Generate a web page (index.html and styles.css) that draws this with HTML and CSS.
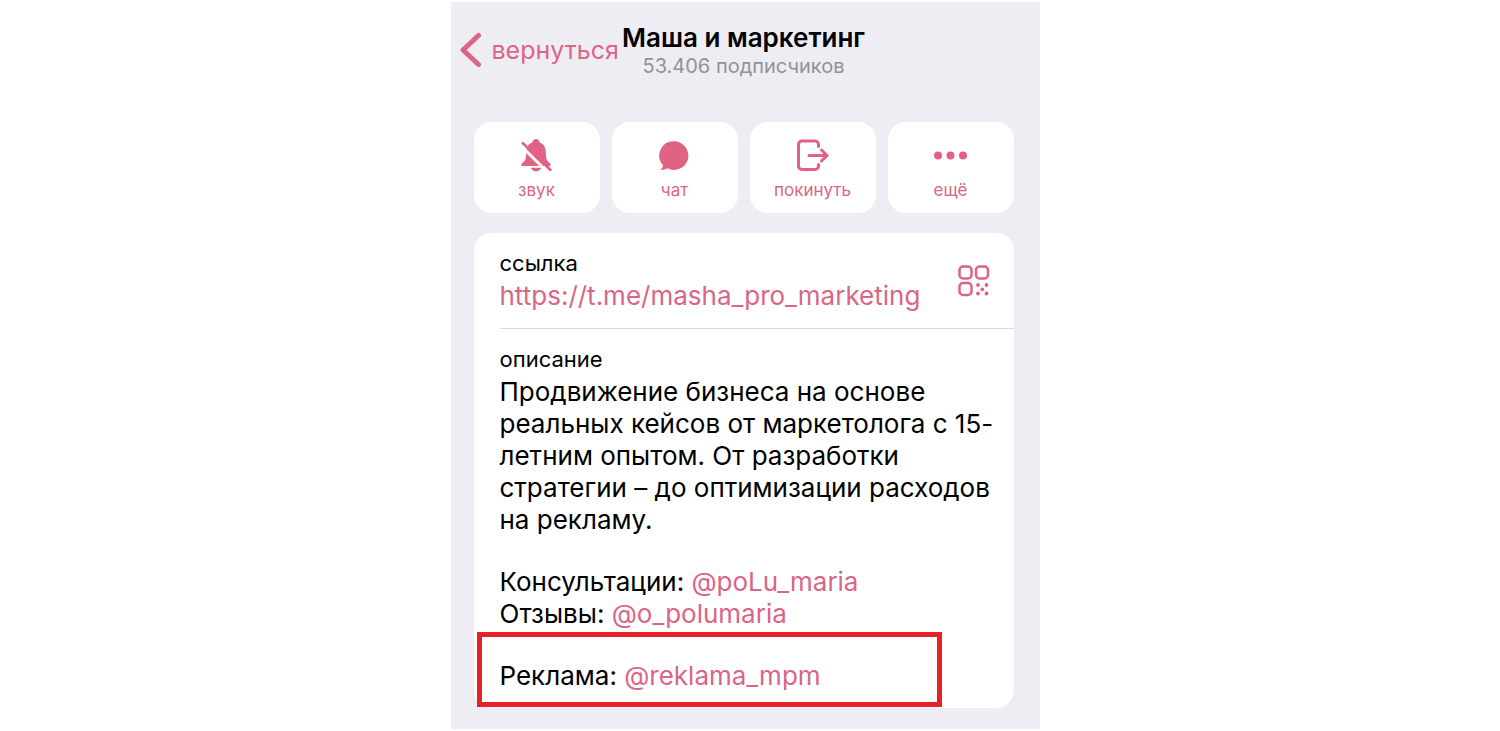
FILE: index.html
```
<!DOCTYPE html>
<html lang="ru">
<head>
    <meta charset="UTF-8">
    <meta name="viewport" content="width=device-width, initial-scale=1.0">
    <title>Маша и маркетинг</title>
    <link rel="stylesheet" href="styles.css">
</head>
<body>
    <main class="profile">
        <header class="topbar">
            <a class="back" href="#">
                <svg class="back-icon" viewBox="0 0 22 36" aria-hidden="true">
                    <path d="M18.500 3.500 3 18 18.500 32.500"/>
                </svg>
                <span>вернуться</span>
            </a>
            <div class="heading">
                <h1>Маша и маркетинг</h1>
                <p>53.406 подписчиков</p>
            </div>
        </header>

        <!-- Channel actions -->
        <div class="actions">
            <button type="button">
                <svg viewBox="0 0 34 34" aria-hidden="true">
                    <path class="fill" d="M2.500 28c-1.500-.2-1.700-2-.5-2.800 2.800-1.800 3.800-3.700 4-7.700l.3-4.500C6.700 8.500 8.500 5.700 12 4.700 12.600 2.400 14 1 16 1s3.400 1.400 4 3.700c3.500 1 5.300 3.800 5.700 8.300l.3 4.500c.2 4 1.200 5.900 4 7.700 1.200.8 1 2.600-.5 2.800zM10.800 29.800h10.400c-.9 2.300-2.700 3.600-5.200 3.600s-4.300-1.300-5.200-3.600z"/>
                    <path class="gap" d="M0 7 27.500 34"/>
                    <path class="slash" d="M2.700 5 30.500 32"/>
                </svg>
                звук
            </button>
            <button type="button">
                <svg viewBox="0 0 34 34" aria-hidden="true">
                    <path class="fill" d="M16 3.300a14.300 14.300 0 1 1-6.500 27c-2 1.100-4.500 1.800-7.300 1.700 1.400-1.200 2.500-2.700 2.800-4.800A14.300 14.300 0 0 1 16 3.300z"/>
                </svg>
                чат
            </button>
            <button type="button">
                <svg viewBox="0 0 34 34" aria-hidden="true">
                    <path class="line" d="M22.500 8.500V6.500a3.500 3.500 0 0 0-3.500-3.500H6a3.500 3.500 0 0 0-3.500 3.500v21.500A3.500 3.500 0 0 0 6 31.500h13a3.500 3.500 0 0 0 3.500-3.500V26.500M13 17.500h18M25.500 12l5.700 5.500-5.700 5.500"/>
                </svg>
                покинуть
            </button>
            <button type="button">
                <svg viewBox="0 0 34 34" aria-hidden="true">
                    <g class="fill">
                        <circle cx="4" cy="17.500" r="4"/>
                        <circle cx="16.500" cy="17.500" r="4"/>
                        <circle cx="29" cy="17.500" r="4"/>
                    </g>
                </svg>
                ещё
            </button>
        </div>

        <!-- Link and description -->
        <section class="card">
            <div class="link-row">
                <div>
                    <h2>ссылка</h2>
                    <a href="https://t.me/masha_pro_marketing">https://t.me/masha_pro_marketing</a>
                </div>
                <button type="button" class="qr" aria-label="QR-код">
                    <svg viewBox="0 0 32 32" aria-hidden="true">
                        <g class="frame">
                            <rect x="1.500" y="1.500" width="12" height="12" rx="3.500"/>
                            <rect x="18" y="1.500" width="12" height="12" rx="3.500"/>
                            <rect x="1.500" y="18" width="12" height="12" rx="3.500"/>
                        </g>
                        <g class="fill">
                            <circle cx="20" cy="20" r="1.900"/>
                            <circle cx="28.500" cy="20" r="1.900"/>
                            <circle cx="24.300" cy="24.300" r="1.900"/>
                            <circle cx="20" cy="28.500" r="1.900"/>
                            <circle cx="28.500" cy="28.500" r="1.900"/>
                        </g>
                    </svg>
                </button>
            </div>
            <div class="about">
                <h2>описание</h2>
                <p>Продвижение бизнеса на основе реальных кейсов от маркетолога с 15-летним опытом. От разработки стратегии – до оптимизации расходов на рекламу.</p>
                <p>Консультации: <a href="#">@poLu_maria</a><br>
                Отзывы: <a href="#">@o_polumaria</a></p>
                <p>Реклама: <a href="#">@reklama_mpm</a></p>
            </div>
            <div class="highlight"></div>
        </section>
    </main>
</body>
</html>
```
FILE: styles.css
```
* {
    box-sizing: border-box;
}

body {
    margin: 0;
    padding: 2px 10px 2px 0;
    background: #fff;
    color: #000;
    font-family: Inter, "Noto Sans", sans-serif;
    font-size: 26px;
    line-height: 32px;
}

h1, h2, p {
    margin: 0;
}

a {
    color: #db6586;
    text-decoration: none;
}

button {
    border: none;
    background: #fff;
    color: #db6586;
    font-family: inherit;
    cursor: pointer;
}

.profile {
    max-width: 589px;
    margin: 0 auto;
    padding: 20px 26px 21px 23px;
    background: #eeedf3;
}

.topbar {
    display: grid;
    grid-template-columns: 1fr auto 1fr;
    align-items: center;
    margin: 0 -14px;
}

.back {
    display: flex;
    align-items: center;
    gap: 10px;
    font-size: 25px;
}

.back-icon {
    width: 22px;
    height: 36px;
    flex: none;
    fill: none;
    stroke: #db6586;
    stroke-width: 5;
    stroke-linecap: round;
    stroke-linejoin: round;
}

.heading {
    text-align: center;
}

.heading h1 {
    font-size: 26px;
    font-weight: 600;
    line-height: 32px;
}

.heading p {
    color: #929297;
    font-size: 20px;
    line-height: 24px;
}

.actions {
    display: grid;
    grid-template-columns: repeat(4, 1fr);
    gap: 12px;
    margin-top: 44px;
}

.actions button {
    display: flex;
    flex-direction: column;
    align-items: center;
    gap: 8px;
    padding: 16px 0 13px;
    border-radius: 18px;
    font-size: 17px;
    line-height: 20px;
}

.actions svg {
    width: 34px;
    height: 34px;
}

.fill {
    fill: #e06384;
}

.slash, .gap, .line {
    fill: none;
    stroke: #e06384;
    stroke-width: 3;
    stroke-linecap: round;
    stroke-linejoin: round;
}

.slash {
    stroke-width: 2.5;
}

.gap {
    stroke: #fff;
}

.card {
    position: relative;
    margin-top: 20px;
    border-radius: 18px;
    background: #fff;
}

.card h2 {
    margin-bottom: 3px;
    font-size: 22px;
    font-weight: 400;
    line-height: 28px;
}

.link-row {
    display: flex;
    justify-content: space-between;
    align-items: center;
    margin-left: 26px;
    padding: 16px 24px 16px 0;
    border-bottom: 1px solid #dcdce0;
}

.qr {
    padding: 0;
}

.qr svg {
    display: block;
    width: 32px;
    height: 32px;
}

.frame {
    fill: none;
    stroke: #db6586;
    stroke-width: 2.5;
}

.about {
    padding: 16px 10px 16px 26px;
}

.about p + p {
    margin-top: 30px;
}

/* red frame over the ads contact */
.highlight {
    position: absolute;
    left: 3px;
    right: 72px;
    bottom: 1px;
    height: 75px;
    border: 5px solid #e62129;
}
```
